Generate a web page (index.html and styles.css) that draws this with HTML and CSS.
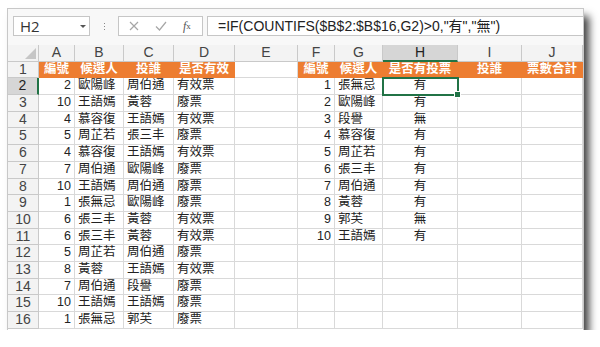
FILE: index.html
```html
<!DOCTYPE html>
<html>
<head>
    <meta charset="utf-8">
    <title>COUNTIFS</title>
    <link rel="stylesheet" href="styles.css">
</head>
<body>
    <div class="window">
        <div class="formula-bar">
            <div class="name-box">H2<span class="arrow"></span></div>
            <div class="grip"><i></i><i></i><i></i></div>
            <div class="fx-box">
                <span class="fx-btn">
                    <svg width="10" height="10" viewBox="0 0 10 10"><path d="M1 1L9 9M9 1L1 9" stroke="#a6a6a6" stroke-width="1.2"/></svg>
                </span>
                <span class="fx-btn">
                    <svg width="12" height="10" viewBox="0 0 12 10"><path d="M1 5.5L4.5 9L11 1" stroke="#a6a6a6" stroke-width="1.2" fill="none"/></svg>
                </span>
                <span class="fx-btn fx"><i>f</i><sub>x</sub></span>
            </div>
            <div class="formula">=IF(COUNTIFS($B$2:$B$16,G2)&gt;0,"有","無")</div>
        </div>
        <div class="sheet" id="sheet"></div>
    </div>

    <script>
        const cols = ['A', 'B', 'C', 'D', 'E', 'F', 'G', 'H', 'I', 'J'];
        const votes = [
            [2, '歐陽峰', '周伯通', '有效票'],
            [10, '王語嫣', '黃蓉', '廢票'],
            [4, '慕容復', '王語嫣', '有效票'],
            [5, '周芷若', '張三丰', '廢票'],
            [4, '慕容復', '王語嫣', '有效票'],
            [7, '周伯通', '歐陽峰', '廢票'],
            [10, '王語嫣', '周伯通', '廢票'],
            [1, '張無忌', '歐陽峰', '廢票'],
            [6, '張三丰', '黃蓉', '有效票'],
            [6, '張三丰', '黃蓉', '有效票'],
            [5, '周芷若', '周伯通', '廢票'],
            [8, '黃蓉', '王語嫣', '有效票'],
            [7, '周伯通', '段譽', '廢票'],
            [10, '王語嫣', '王語嫣', '廢票'],
            [1, '張無忌', '郭芙', '廢票']
        ];
        const names = ['張無忌', '歐陽峰', '段譽', '慕容復', '周芷若', '張三丰', '周伯通', '黃蓉', '郭芙', '王語嫣'];
        const headLeft = ['編號', '候選人', '投誰', '是否有效'];
        const headRight = ['編號', '候選人', '是否有投票', '投誰', '票數合計'];

        const sheet = document.getElementById('sheet');

        function cell(text, cls) {
            const div = document.createElement('div');
            div.className = 'cell ' + (cls || '');
            div.textContent = text;
            sheet.appendChild(div);
            return div;
        }

        // column headers
        cell('', 'corner');
        cols.forEach(c => cell(c, 'col-head' + (c === 'H' ? ' active' : '')));

        for (let r = 1; r <= 16; r++) {
            cell(r, 'row-head' + (r === 2 ? ' active' : ''));
            if (r === 1) {
                headLeft.forEach(t => cell(t, 'title'));
                cell('', '');
                headRight.forEach(t => cell(t, 'title'));
                continue;
            }
            const v = votes[r - 2];
            cell(v[0], 'num');
            cell(v[1], 'text');
            cell(v[2], 'text');
            cell(v[3], 'text');
            cell('', '');
            const i = r - 2;
            if (i < names.length) {
                const voted = votes.some(x => x[1] === names[i]);
                cell(i + 1, 'num');
                cell(names[i], 'text');
                cell(voted ? '有' : '無', 'center' + (r === 2 ? ' selected' : ''));
            } else {
                cell('', '');
                cell('', '');
                cell('', '');
            }
            cell('', '');
            cell('', '');
        }
    </script>
</body>
</html>
```

FILE: styles.css
```css
* {
    box-sizing: border-box;
    margin: 0;
    padding: 0;
}
body {
    background: white;
    font-family: "Liberation Sans", "Noto Sans CJK TC", sans-serif;
    color: #222;
}
.window {
    margin: 9px 0 0 8px;
    width: 575px;
    height: 321px;
    background: white;
    overflow: hidden;
    box-shadow: 0 0 0 1px #c8c8c8, 6px 7px 8px rgba(0, 0, 0, 0.75);
}
.formula-bar {
    display: flex;
    align-items: center;
    height: 36px;
    padding: 7px 0 9px 5px;
    background: #f8f8f8;
}
.name-box {
    position: relative;
    width: 77px;
    height: 20px;
    background: white;
    border: 1px solid #c6c6c6;
    font-size: 15px;
    line-height: 18px;
    padding-left: 6px;
    color: #333;
    font-family: "Open Sans", sans-serif;
}
.arrow {
    position: absolute;
    right: 3px;
    top: 8px;
    border: 3px solid transparent;
    border-top: 3px solid #555;
}
.grip {
    display: flex;
    flex-direction: column;
    gap: 2px;
    width: 28px;
    align-items: center;
}
.grip i {
    width: 1px;
    height: 1px;
    background: #888;
}
.fx-box {
    display: flex;
    align-items: center;
    width: 85px;
    height: 20px;
    background: white;
    border: 1px solid #c6c6c6;
    padding-left: 10px;
    gap: 16px;
}
.fx-btn {
    display: flex;
    align-items: center;
}
.fx {
    font-family: "Liberation Serif", serif;
    font-size: 12px;
    color: #555;
}
.fx sub {
    font-size: 9px;
    font-style: normal;
}
.formula {
    flex: 1;
    height: 20px;
    margin-left: 4px;
    background: white;
    border: 1px solid #c6c6c6;
    border-right: none;
    padding-left: 10px;
    font-size: 14px;
    line-height: 18px;
    color: #222;
    white-space: nowrap;
}
.sheet {
    display: grid;
    grid-template-columns: 31px 36px 49px 50px 61px 63px 37px 48px 75px 64px 61px;
    grid-auto-rows: 16.7px;
}
.cell {
    border-right: 1px solid #d9d9d9;
    border-bottom: 1px solid #d9d9d9;
    font-size: 12.5px;
    line-height: 15.5px;
    padding: 0 3px;
    white-space: nowrap;
    overflow: hidden;
}
.num {
    text-align: right;
}
.center {
    text-align: center;
}
.corner,
.col-head,
.row-head {
    background: #f3f3f3;
    border-color: #c9c9c9;
    color: #444;
    font-size: 14px;
    text-align: center;
}
.corner {
    position: relative;
}
.corner::after {
    content: "";
    position: absolute;
    right: 2px;
    bottom: 2px;
    border-left: 11px solid transparent;
    border-bottom: 11px solid #c6c6c6;
}
.col-head.active {
    background: #d6d6d6;
    border-bottom: 2px solid #217346;
    color: #222;
}
.row-head.active {
    background: #d6d6d6;
    border-right: 2px solid #217346;
    color: #222;
}
.title {
    background: #ed7d31;
    border-color: #ed7d31;
    color: white;
    font-weight: bold;
    text-align: center;
}
.selected {
    position: relative;
    outline: 2px solid #217346;
    outline-offset: -1px;
    z-index: 1;
    overflow: visible;
}
.selected::after {
    content: "";
    position: absolute;
    right: -4px;
    bottom: -4px;
    width: 5px;
    height: 5px;
    background: #217346;
    border: 1px solid white;
}
```
